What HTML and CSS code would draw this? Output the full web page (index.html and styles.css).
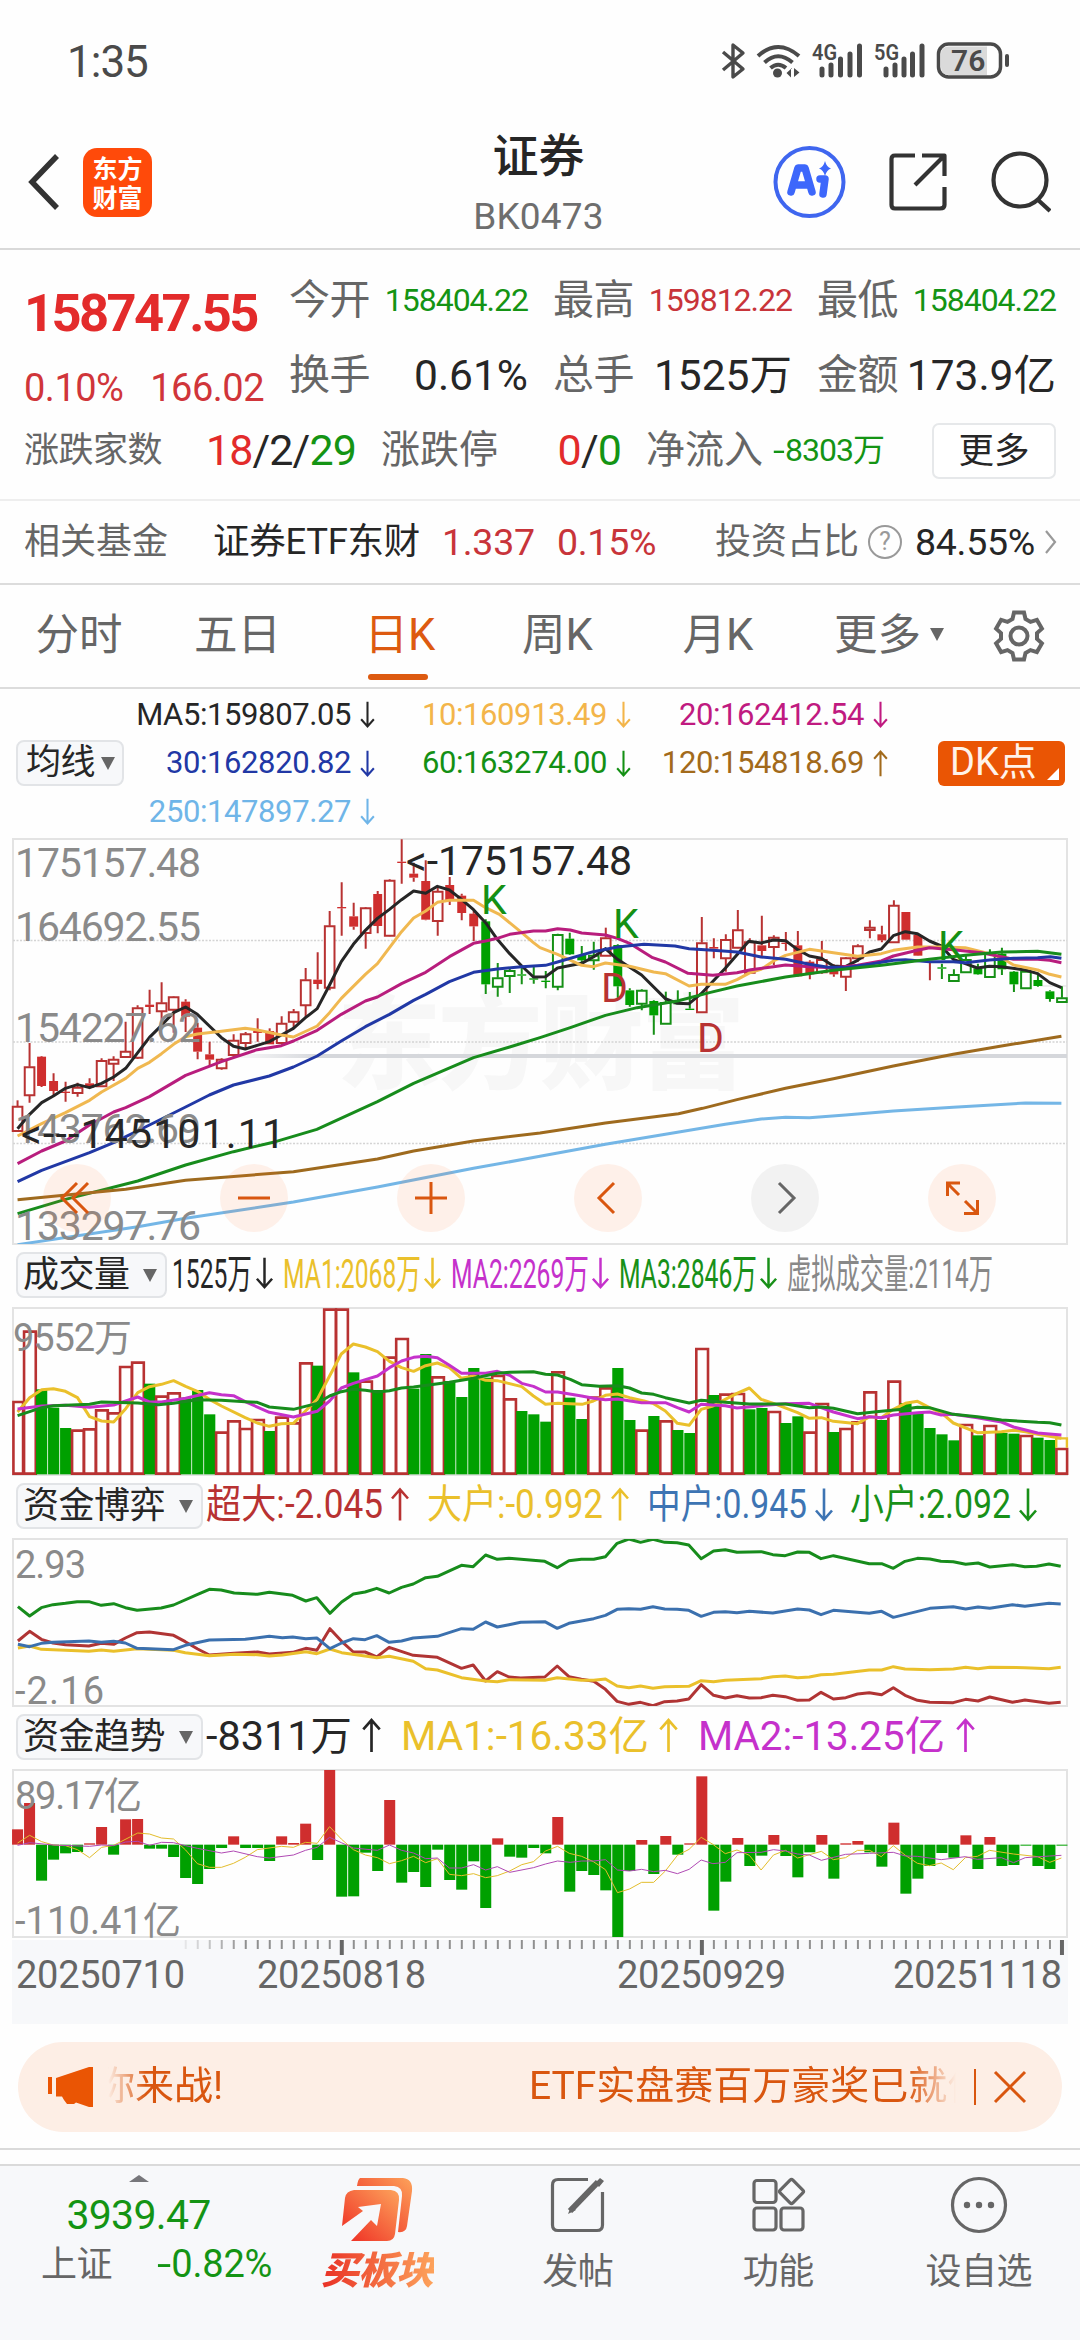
FILE: index.html
```html
<!DOCTYPE html>
<html lang="zh-CN">
<head>
<meta charset="utf-8">
<title>证券 BK0473</title>
<link rel="stylesheet" href="styles.css">
</head>
<body>
<svg class="defs" width="0" height="0">
  <defs>
    <symbol id="down" viewBox="0 0 20 34"><path d="M10 1V32M2 23L10 32L18 23" fill="none" stroke="currentColor" stroke-width="2.6"/></symbol>
    <symbol id="up" viewBox="0 0 20 34"><path d="M10 33V2M2 11L10 2L18 11" fill="none" stroke="currentColor" stroke-width="2.6"/></symbol>
    <linearGradient id="fire" x1="0" y1="1" x2="1" y2="0"><stop offset="0" stop-color="#ee2a22"/><stop offset="1" stop-color="#fda35b"/></linearGradient>
  </defs>
</svg>

<div class="status">
  <span class="clock">1:35</span>
  <svg width="300" height="44" viewBox="715 39 300 44" fill="none" stroke="#4a4a4a">
    <path d="M723 52L743 69L733 77V45L743 53L723 70" stroke-width="3.4" stroke-linejoin="round"/>
    <path d="M758 56Q778 38 799 56M764.500 62.500Q778 50 792.500 62.500M770.500 68Q778 61.500 786 68" stroke-width="4"/>
    <circle cx="777.500" cy="73" r="4.500" fill="#4a4a4a" stroke="none"/>
    <path d="M792 68L786.500 73L791 77.500V68ZM794 68V77L799.500 72.500Z" fill="#4a4a4a" stroke="none"/>
    <path d="M822 69V75M831 65V75M840.500 59V75M850 54V75M859.500 46V75M886 69V75M895 65V75M904 59V75M912.500 54V75M922 46V75" stroke-width="5" stroke-linecap="round"/>
    <rect x="938.500" y="44" width="62" height="33" rx="10" stroke-width="3.500"/>
    <path d="M987 46.500H949Q941 46.500 941 54V67Q941 75 949 75H987Z" fill="#dadada" stroke="none"/>
    <path d="M1007 56V65" stroke-width="4" stroke-linecap="round"/>
    <g fill="#4a4a4a" stroke="none" class="bold">
      <text x="812" y="60" font-size="22" textLength="25" lengthAdjust="spacingAndGlyphs">4G</text>
      <text x="874" y="60" font-size="22" textLength="25" lengthAdjust="spacingAndGlyphs">5G</text>
      <text x="951" y="71" font-size="30">76</text>
    </g>
  </svg>
</div>

<header class="header">
  <svg class="back" width="34" height="60" viewBox="0 0 34 60"><path d="M30 4L5 30L30 56" fill="none" stroke="#333" stroke-width="5.500"/></svg>
  <div class="logo"><span>东方</span><span>财富</span></div>
  <div class="title"><h1>证券</h1><p>BK0473</p></div>
  <div class="actions">
    <svg width="76" height="76" viewBox="770 144 76 76">
      <circle cx="808.500" cy="182" r="34" fill="none" stroke="#3f66ef" stroke-width="4"/>
      <g fill="none" stroke="#3d67fb" stroke-width="7.500" stroke-linecap="round" stroke-linejoin="round"><path d="M790 192L797 168H804L811 192M795 185H806"/><path d="M819 179H824L822 194" /></g>
      <path d="M824 161Q825.500 167 830 168.500Q825.500 170 824 176Q822.500 170 818 168.500Q822.500 167 824 161Z" fill="#3d67fb"/>
    </svg>
    <svg width="62" height="64" viewBox="885 150 62 64" fill="none" stroke="#333" stroke-width="4.200" stroke-linejoin="round"><path d="M914 155.500H894Q890.500 155.500 890.500 159V205Q890.500 208.500 894 208.500H939Q943.500 208.500 943.500 205V187M921 155.500H943.500V176M943.500 155.500L914 185"/></svg>
    <svg width="64" height="64" viewBox="986 150 64 64" fill="none" stroke="#333" stroke-width="4.200"><circle cx="1019" cy="180" r="26.500"/><path d="M1036 199L1049 211"/></svg>
  </div>
</header>

<section class="quote">
  <div class="now">
    <strong>158747.55</strong>
    <div class="chg"><span>0.10%</span><span>166.02</span></div>
  </div>
  <div class="stats">
    <div><label>今开</label><b class="sm green">158404.22</b></div>
    <div><label>最高</label><b class="sm red">159812.22</b></div>
    <div><label>最低</label><b class="sm green">158404.22</b></div>
    <div><label>换手</label><b>0.61%</b></div>
    <div><label>总手</label><b>1525万</b></div>
    <div><label>金额</label><b>173.9亿</b></div>
  </div>
  <div class="breadth">
    <div><label class="s35">涨跌家数</label><b class="big"><i class="up">18</i>/2/<i class="green">29</i></b></div>
    <div><label class="s39">涨跌停</label><b class="big"><i class="up">0</i>/<i class="green">0</i></b></div>
    <div><label class="s39">净流入</label><b class="sm green"><i class="minus"></i>8303万</b></div>
    <button>更多</button>
  </div>
</section>

<section class="fund">
  <label>相关基金</label><span class="name">证券ETF东财</span><span class="red">1.337</span><span class="red">0.15%</span>
  <label>投资占比</label><em>?</em><span class="share">84.55%</span>
  <svg width="14" height="26" viewBox="0 0 14 26"><path d="M2 2L11 13L2 24" fill="none" stroke="#999" stroke-width="2.200"/></svg>
</section>

<nav class="tabs">
  <span>分时</span><span>五日</span><span class="on">日K</span><span>周K</span><span>月K</span><span class="more">更多<i class="tri"></i></span>
  <svg width="54" height="54" viewBox="-27 -27 54 54" fill="none" stroke="#666" stroke-width="4"><path d="M-5 -23.500H5L6.500 -17L11.500 -14.100L17.900 -16.100L22.900 -7.400L18 -2.900V2.900L22.900 7.400L17.900 16.100L11.500 14.100L6.500 17L5 23.500H-5L-6.500 17L-11.500 14.100L-17.900 16.100L-22.900 7.400L-18 2.900V-2.900L-22.900 -7.400L-17.900 -16.100L-11.500 -14.100L-6.500 -17Z"/><circle r="8.500"/></svg>
</nav>

<section class="ma">
  <button class="pick ma-pick">均线<i class="tri"></i></button>
  <div class="ma-grid">
    <span style="color:#262626">MA5:159807.05<svg><use href="#down"/></svg></span>
    <span style="color:#f3b54a">10:160913.49<svg><use href="#down"/></svg></span>
    <span style="color:#c01a80">20:162412.54<svg><use href="#down"/></svg></span>
    <span style="color:#2138a5">30:162820.82<svg><use href="#down"/></svg></span>
    <span style="color:#149014">60:163274.00<svg><use href="#down"/></svg></span>
    <span style="color:#a26a1b">120:154818.69<svg><use href="#up"/></svg></span>
    <span style="color:#6fb5e8">250:147897.27<svg><use href="#down"/></svg></span>
  </div>
  <div class="dk">DK点</div>
</section>

<section class="panel kline">
  <svg class="labels under" viewBox="0 838 1080 405">
    <text class="wm" x="337" y="1080" textLength="408">东方财富</text>
    <path d="M13 939.500H1067M13 1041H1067M13 1142.500H1067" stroke="#d4d4d4" stroke-width="1.300" stroke-dasharray="2 1.500"/>
    <rect x="220" y="1053" width="847" height="4" fill="url(#bar)"/>
    <path d="M1040 985H1067" stroke="#ddd"/>
    <linearGradient id="bar"><stop offset="0" stop-color="#d5d7db" stop-opacity="0"/><stop offset=".12" stop-color="#d5d7db"/></linearGradient>
  </svg>
  <svg class="plot" id="kline" viewBox="0 24 3136 1215" preserveAspectRatio="none"></svg>
  <svg class="labels" viewBox="0 838 1080 405" font-size="41">
    <g fill="#8a8a8a">
      <text x="15" y="876" textLength="186">175157.48</text><text x="15" y="940" textLength="186">164692.55</text><text x="15" y="1041" textLength="186">154227.62</text><text x="15" y="1142" textLength="186">143762.69</text><text x="15" y="1239" textLength="186">133297.76</text>
    </g>
    <g fill="#262626"><text x="406" y="874" textLength="226">&lt;-175157.48</text><text x="21" y="1147" textLength="264">&lt;---145101.11</text></g>
    <g fill="#149014"><text x="481" y="913">K</text><text x="613" y="937">K</text><text x="938" y="959">K</text></g>
    <g fill="#b83232"><text x="601" y="1001">D</text><text x="697" y="1051">D</text></g>
  </svg>
  <div class="controls">
    <span><svg viewBox="0 0 68 68"><path d="M34 19L19 34L34 49M45 19L30 34L45 49"/></svg></span>
    <span><svg viewBox="0 0 68 68"><path d="M18 34H50"/></svg></span>
    <span><svg viewBox="0 0 68 68"><path d="M18 34H50M34 18V50"/></svg></span>
    <span><svg viewBox="0 0 68 68"><path d="M40 19L25 34L40 49"/></svg></span>
    <span class="off"><svg viewBox="0 0 68 68"><path d="M28 19L43 34L28 49"/></svg></span>
    <span><svg viewBox="0 0 68 68"><path d="M32 19H19.500V32M19.500 19.500L31 31M37 37L49 49M49.500 36V49.500H36" /></svg></span>
  </div>
</section>

<div class="legend l1">
  <button class="pick w150">成交量<i class="tri"></i></button>
  <svg viewBox="172 1248 908 56" font-size="40">
    <g fill="#262626" color="#262626"><text x="172" y="1289" textLength="80" lengthAdjust="spacingAndGlyphs">1525万</text><use href="#down" x="255" y="1257" width="19" height="34"/></g>
    <g fill="#eac02b" color="#eac02b"><text x="283" y="1289" textLength="138" lengthAdjust="spacingAndGlyphs">MA1:2068万</text><use href="#down" x="423" y="1257" width="19" height="34"/></g>
    <g fill="#c531cb" color="#c531cb"><text x="451" y="1289" textLength="138" lengthAdjust="spacingAndGlyphs">MA2:2269万</text><use href="#down" x="591" y="1257" width="19" height="34"/></g>
    <g fill="#189018" color="#189018"><text x="619" y="1289" textLength="138" lengthAdjust="spacingAndGlyphs">MA3:2846万</text><use href="#down" x="759" y="1257" width="19" height="34"/></g>
    <text fill="#888" x="787" y="1289" textLength="206" lengthAdjust="spacingAndGlyphs">虚拟成交量:2114万</text>
  </svg>
</div>
<section class="panel sub">
  <svg class="plot" id="volume" viewBox="0 201 3136 501" preserveAspectRatio="none"></svg>
  <svg class="labels" viewBox="0 1307 1080 167" font-size="38"><text fill="#8a8a8a" x="13" y="1350" textLength="119">9552万</text></svg>
</section>

<div class="legend l2">
  <button class="pick">资金博弈<i class="tri"></i></button>
  <svg viewBox="206 1478 874 56" font-size="40">
    <g fill="#b83232" color="#b83232"><text x="206" y="1518" textLength="177" lengthAdjust="spacingAndGlyphs">超大:-2.045</text><use href="#up" x="390" y="1487" width="20" height="35"/></g>
    <g fill="#eac02b" color="#eac02b"><text x="427" y="1518" textLength="176" lengthAdjust="spacingAndGlyphs">大户:-0.992</text><use href="#up" x="610" y="1487" width="20" height="35"/></g>
    <g fill="#3d74b3" color="#3d74b3"><text x="647" y="1518" textLength="160" lengthAdjust="spacingAndGlyphs">中户:0.945</text><use href="#down" x="814" y="1487" width="20" height="35"/></g>
    <g fill="#189018" color="#189018"><text x="850" y="1518" textLength="161" lengthAdjust="spacingAndGlyphs">小户:2.092</text><use href="#down" x="1018" y="1487" width="20" height="35"/></g>
  </svg>
</div>
<section class="panel sub">
  <svg class="plot" id="flow" viewBox="0 174 1568 501" preserveAspectRatio="none"></svg>
  <svg class="labels" viewBox="0 1538 1080 167" font-size="38" fill="#8a8a8a"><text x="15" y="1577" textLength="71">2.93</text><text x="15" y="1703" textLength="89">-2.16</text></svg>
</section>

<div class="legend l3">
  <button class="pick">资金趋势<i class="tri"></i></button>
  <svg viewBox="206 1709 874 56" font-size="40">
    <g fill="#262626" color="#262626"><text x="206" y="1750" textLength="146" lengthAdjust="spacingAndGlyphs">-8311万</text><use href="#up" x="361" y="1718" width="21" height="35"/></g>
    <g fill="#eac02b" color="#eac02b"><text x="401" y="1750" textLength="248" lengthAdjust="spacingAndGlyphs">MA1:-16.33亿</text><use href="#up" x="658" y="1718" width="21" height="35"/></g>
    <g fill="#c531cb" color="#c531cb"><text x="698" y="1750" textLength="247" lengthAdjust="spacingAndGlyphs">MA2:-13.25亿</text><use href="#up" x="955" y="1718" width="21" height="35"/></g>
  </svg>
</div>
<section class="panel sub">
  <svg class="plot" id="trend" viewBox="0 177 3136 501" preserveAspectRatio="none"></svg>
  <svg class="labels" viewBox="0 1769 1080 167" font-size="38" fill="#8a8a8a"><text x="15" y="1808" textLength="127">89.17亿</text><text x="15" y="1933" textLength="166">-110.41亿</text></svg>
</section>

<section class="axis">
  <svg id="axis" viewBox="12 1939 1056 84" width="1056" height="84" font-size="38" fill="#666">
    <text x="16" y="1987" textLength="169">20250710</text><text x="257" y="1987" textLength="169">20250818</text><text x="617" y="1987" textLength="169">20250929</text><text x="893" y="1987" textLength="169">20251118</text>
  </svg>
</section>

<aside class="notice">
  <svg width="48" height="44" viewBox="47 2064 48 44" fill="#ea5504"><path d="M48 2076H52V2093H48ZM56 2077L89 2066H93V2106H89L76 2101.500L74 2103H67L64 2099L62 2095.500H56Z"/></svg>
  <div class="ticker"><span class="t1">你来战!</span><span class="t2">ETF实盘赛百万豪奖已就位</span></div>
  <i class="sep"></i>
  <svg width="34" height="34" viewBox="0 0 34 34"><path d="M2 2L32 32M32 2L2 32" stroke="#d9560f" stroke-width="3"/></svg>
</aside>
<div class="gap"></div>

<footer class="bottom">
  <div class="index"><i class="caret"></i><b>3939.47</b><p><span>上证</span><em><i class="minus"></i>0.82%</em></p></div>
  <div class="buy">
    <svg width="74" height="66" viewBox="340 2176 74 66" fill="url(#fire)"><path d="M360 2177H403Q413 2178 412 2190L407 2225Q406 2232 398 2231L402 2195Q403 2186 394 2185H357Q358 2178 360 2177Z"/><path fill-rule="evenodd" d="M354 2189H391Q400 2190 399 2199L395 2233Q394 2240 387 2240H351L371 2219L377 2225L381 2203L358 2206L363 2210L342 2225L345 2197Q346 2190 354 2189Z"/></svg>
    <span>买板块</span>
  </div>
  <div>
    <svg width="60" height="60" viewBox="548 2174 60 60" fill="none" stroke="#666" stroke-width="3.200"><path d="M588 2178.500H558Q552.500 2178.500 552.500 2184V2224Q552.500 2229.500 558 2229.500H597Q602.500 2229.500 602.500 2224V2191"/><path d="M570 2210L598 2181" stroke-width="6"/><path d="M568 2213L571 2205L576 2209ZM600 2177L604 2180L599 2186L595 2182Z" fill="#666" stroke="none"/></svg>
    <span>发帖</span>
  </div>
  <div>
    <svg width="60" height="60" viewBox="748 2174 60 60" fill="none" stroke="#666" stroke-width="3.200"><rect x="754" y="2179.500" width="22" height="22" rx="3"/><rect x="754" y="2207" width="22" height="22" rx="3"/><rect x="781" y="2207" width="22" height="22" rx="3"/><rect x="782.500" y="2181.500" width="18" height="18" rx="2" transform="rotate(45 791.500 2190.500)"/></svg>
    <span>功能</span>
  </div>
  <div>
    <svg width="60" height="60" viewBox="949 2174 60 60" fill="none" stroke="#666" stroke-width="3.200"><circle cx="979" cy="2204" r="26.500"/><g fill="#666" stroke="none"><circle cx="967" cy="2204" r="3.200"/><circle cx="979" cy="2204" r="3.200"/><circle cx="991" cy="2204" r="3.200"/></g></svg>
    <span>设自选</span>
  </div>
</footer>
<script src="charts.js"></script>
</body>
</html>
```
FILE: styles.css
```css
* { box-sizing: border-box; margin: 0; padding: 0; }
body { width: 1080px; height: 2340px; overflow: hidden; background: #fefefe; color: #262626; font-family: Roboto, "Noto Sans CJK SC", sans-serif; }
svg { display: block; flex: none; }
svg text { font-family: Roboto, "Noto Sans CJK SC", sans-serif; }
.defs { position: absolute; }
i, em { font-style: normal; }
b { font-weight: 400; }
button { font: inherit; color: inherit; }
.red { color: #c8343a; }
.up { color: #e32b2b; }
.green { color: #149414; }
.bold { font-weight: 600; }
.minus::before { content: "-"; display: inline-block; transform: scaleX(1.35); transform-origin: left; margin-right: 4px; }

.status { height: 124px; padding: 39px 65px 0 67px; display: flex; justify-content: space-between; }
.clock { font-size: 44px; line-height: 46px; letter-spacing: -1px; color: #4a4a4a; }

.header { height: 126px; border-bottom: 2px solid #d9d9d9; display: grid; grid-template-columns: 56px 71px 1fr 310px; padding-left: 27px; }
.back { margin-top: 28px; }
.logo { margin-top: 24px; width: 69px; height: 69px; border-radius: 14px; background: #ff4a0a; color: #fff; font: 700 25px/29px "Noto Sans CJK SC", sans-serif; display: flex; flex-direction: column; align-items: center; padding-top: 5px; }
.title { text-align: center; padding-left: 152px; width: 617px; }
.title h1 { font-size: 46px; font-weight: 500; line-height: 65px; }
.title p { font-size: 37px; line-height: 50px; color: #6e6e6e; letter-spacing: .2px; margin-top: 3px; }
.actions { display: flex; align-items: center; gap: 39px; padding-bottom: 8px; }

.quote { height: 251px; border-bottom: 2px solid #eee; padding-top: 13px; display: grid; grid-template-columns: 265px 766px; grid-template-rows: 150px 75px; padding-left: 24px; }
.now { color: #e32b2b; height: 175px; padding-top: 12px; }
.now strong { display: block; font-size: 52.500px; line-height: 76px; letter-spacing: -2.600px; }
.chg { display: flex; justify-content: space-between; width: 240px; font-size: 38px; line-height: 75px; letter-spacing: -.5px; color: #d0353a; }
.stats { display: grid; grid-template-columns: repeat(3, 239px); column-gap: 25px; grid-auto-rows: 75px; }
.stats div, .breadth div { display: flex; justify-content: space-between; align-items: center; line-height: 75px; white-space: nowrap; }
.quote label { font-size: 41px; color: #666; letter-spacing: -.5px; }
.quote b { font-size: 42.500px; }
.quote b.sm { font-size: 32px; letter-spacing: -1px; }
.quote .s35 { font-size: 35px; }
.quote .s39 { font-size: 39px; letter-spacing: 0; }
.quote b.big { font-size: 43px; letter-spacing: -.9px; }
.breadth { grid-column: 1 / 3; display: grid; grid-template-columns: 332px 240px 238px 124px; column-gap: 25px; align-items: center; height: 75px; width: 1032px; justify-content: start; }
.breadth button { height: 56px; width: 124px; border: 2px solid #e6e8ea; border-radius: 7px; background: #fff; font-size: 35.500px; line-height: 50px; margin-left: 23px; }

.fund { height: 84px; border-bottom: 2px solid #dcdcdc; padding-left: 24px; display: grid; grid-template-columns: 189px 229px 115px 158px 151px 49px 129px 20px; align-items: center; line-height: 80px; font-size: 37.500px; letter-spacing: -.3px; white-space: nowrap; }
.fund label { font-size: 36px; color: #666; letter-spacing: 0; }
.fund .name { font-size: 36.500px; }
.fund em { width: 34px; height: 34px; border: 2.500px solid #999; border-radius: 50%; color: #999; font-size: 25px; line-height: 29px; text-align: center; letter-spacing: 0; margin-left: 2px; }

.tabs { height: 104px; border-bottom: 2px solid #dcdcdc; display: grid; grid-template-columns: 158px 159px 166px 149px 172px 188px 54px; align-items: center; text-align: center; font-size: 43.500px; line-height: 100px; color: #666; }
.tabs span { position: relative; }
.tabs .more { padding-right: 18px; }
.tabs .on { color: #dd5a10; }
.tabs .on::after { content: ""; position: absolute; left: 51px; bottom: 6px; width: 60px; height: 6px; border-radius: 3px; background: #dd5a10; }
.tri { display: inline-block; border: 7.500px solid transparent; border-top: 13px solid #666; border-bottom: 0; }
.tabs .tri { margin-left: 9px; margin-bottom: 9px; }

.ma { height: 150px; display: grid; grid-template-columns: 108px 765px 1fr; padding: 0 16px; align-items: center; }
.ma > * { position: relative; top: -1px; }
.pick { height: 46px; border: 2px solid #e2e4e7; border-radius: 8px; background: #f7f8fa; font-size: 36px; line-height: 40px; display: flex; align-items: center; justify-content: space-between; padding: 0 8px 0 5px; letter-spacing: -.5px; white-space: nowrap; }
.ma-pick { padding: 0 7px 0 8px; font-size: 35px; }
.ma-grid { display: grid; grid-template-columns: 252px 256px 257px; grid-auto-rows: 48.500px; }
.ma-grid span { display: flex; justify-content: flex-end; align-items: center; gap: 8px; font-size: 31px; letter-spacing: -.4px; line-height: 48px; }
.ma-grid svg { width: 17px; height: 27px; }
.ma .dk { width: 127px; height: 45px; margin-left: 49px; border-radius: 6px; background: #ea5504; color: #fff3ea; font-size: 38px; line-height: 43px; padding-left: 12px; }
.dk::after { content: ""; position: absolute; right: 6px; bottom: 6px; border-left: 12px solid transparent; border-bottom: 12px solid #fff; }

.panel { position: relative; width: 1080px; }
.panel::before { content: ""; position: absolute; left: 12px; right: 12px; top: -1px; bottom: -1px; border: 2px solid #e3e3e3; }
.plot, .labels { position: absolute; left: 0; top: 0; width: 1080px; height: 100%; }
.labels { overflow: visible; }
.plot * { vector-effect: non-scaling-stroke; }
.kline { height: 405px; }
.sub { height: 167px; }
.wm { font-size: 104px; font-weight: 900; fill: #f7f7f7; }
.controls { position: absolute; left: 42.500px; top: 325px; display: flex; gap: 109px; }
.controls span { width: 68px; height: 68px; border-radius: 50%; background: rgba(255, 120, 50, .1); }
.controls path { fill: none; stroke: #d9560f; stroke-width: 3; }
.controls .off { background: rgba(80, 80, 80, .07); }
.controls .off path { stroke: #666; }

.legend { display: flex; align-items: center; padding-left: 16px; height: 64px; }
.legend .pick { width: 187px; }
.legend .pick.w150 { width: 151px; }
.legend > svg { width: 874px; height: 56px; margin-left: 3px; overflow: visible; }
.legend.l1 > svg { width: 908px; margin-left: 5px; }
.legend > * { position: relative; top: -1px; }

.axis { margin: 3px 12px 0; background: #f7f8fa; height: 84px; }

.notice { margin: 18px 18px 0; height: 90px; border-radius: 45px; background: #fdeee5; color: #d9560f; display: flex; align-items: center; padding-left: 29px; }
.ticker { width: 850px; height: 90px; margin-left: 13px; overflow: hidden; white-space: nowrap; font-size: 39px; line-height: 88px; display: flex; -webkit-mask-image: linear-gradient(90deg, transparent 0, #000 38px, #000 800px, transparent 848px); mask-image: linear-gradient(90deg, transparent 0, #000 38px, #000 800px, transparent 848px); }
.ticker span { flex: none; }
.t1 { width: 433px; margin-left: -12px; }
.sep { width: 1.500px; height: 36px; background: #d9560f; margin: 0 17px 0 16px; }
.gap { margin-top: 16px; height: 18px; border: solid #dadada; border-width: 2px 0; }

.bottom { height: 175px; background: #f7f8fa; display: grid; grid-template-columns: 277px repeat(4, 200.500px); color: #666; font-size: 36px; }
.bottom > div { display: flex; flex-direction: column; align-items: center; padding-top: 9px; }
.bottom span { line-height: 50px; letter-spacing: -.5px; }
.bottom > div > span { margin-top: 12px; }
.bottom .buy { padding-top: 11px; }
.bottom .buy span { font-size: 38px; font-weight: 900; font-style: italic; margin-top: 3px; background: linear-gradient(90deg, #e93025, #fda35b); -webkit-background-clip: text; background-clip: text; color: transparent; }
.caret { border: 10px solid transparent; border-bottom: 7px solid #77777b; border-top: 0; }
.index b { font-size: 41px; line-height: 50px; margin-top: 8px; color: #149414; letter-spacing: -.7px; }
.index p { display: flex; gap: 45px; line-height: 48px; padding-left: 41px; width: 277px; white-space: nowrap; }
.index em { font-size: 38px; color: #149414; letter-spacing: -.2px; }
```
FILE: charts.js
```js
const NS = 'http://www.w3.org/2000/svg';
const RED = '#b83232', FILL = '#cf2e2e', GREEN = '#169016', GFILL = '#00a000';
const at = i => 51 + 34.857 * i;

function add(id, tag, attrs) {
  const el = document.createElementNS(NS, tag);
  for (const k in attrs) el.setAttribute(k, attrs[k]);
  document.getElementById(id).appendChild(el);
}
const line = (id, color, pts, w = 3) => add(id, 'polyline', { points: pts, fill: 'none', stroke: color, 'stroke-width': w, 'stroke-linejoin': 'round' });

// Candles: kind, high, body top, body bottom, low. r/g hollow, R/G solid.
const candles = `r808,825,900,900 r636,707,793,815 R675,677,765,768 R727,750,780,795 R752,782,786,812 r755,768,786,797 R742,757,770,772 r682,688,766,768
r676,684,698,750 r572,660,678,680 r523,530,680,684 R476,521,528,549 r454,515,541,572 r496,497,536,605 R505,512,557,603 R575,590,662,685
R632,670,686,703 r682,684,712,716 r610,627,672,680 r603,608,636,655 R562,600,606,632 R592,600,640,640 r556,576,636,640 r534,542,572,590
r411,446,523,560 R364,446,459,475 r240,284,470,478 R154,228,232,314 R215,256,287,296 r228,230,306,353 R180,189,285,307 r145,147,314,316
R25,92,96,158 R95,128,140,152 R88,150,266,268 r165,180,270,314 R138,162,208,222 R188,194,246,268 R240,248,286,330 G265,271,460,489
g396,440,467,497 g408,418,435,486 G408,430,434,460 G402,442,446,458 G420,449,453,472 g308,310,467,478 G305,323,370,372 G345,372,388,404
g332,372,388,416 r290,320,374,374 G340,342,466,500 G472,478,522,527 g475,477,518,538 G508,510,553,611 g482,514,578,578 G478,517,520,520
G483,533,537,537 r258,335,544,544 R322,348,353,382 r310,325,382,422 r237,296,350,352 r322,332,425,426 R254,343,360,375 r313,318,348,402
R303,335,339,359 R300,343,436,437 R388,392,430,445 r330,385,424,428 R400,412,430,437 r378,380,437,480 r340,344,382,392 r268,288,297,322
R284,310,328,334 r208,222,334,336 R243,243,326,326 R308,312,374,375 R390,391,393,448 G398,409,413,444 g415,430,450,452 g370,385,424,425
G398,412,430,431 g355,366,438,440 G350,368,415,432 G420,422,460,483 g420,420,472,473 G425,447,465,467 G478,481,504,512 g466,500,513,515`.split(/\s+/);

candles.forEach((c, i) => {
  const kind = c[0], [hi, top, bot, lo] = c.slice(1).split(',').map(Number), x = at(i);
  const color = /r/i.test(kind) ? RED : GREEN, solid = /[RG]/.test(kind);
  add('kline', 'path', { d: `M${x} ${hi}V${top}M${x} ${bot}V${lo}`, stroke: color, 'stroke-width': 2 });
  if (solid) add('kline', 'rect', { x: x - 13, y: top, width: 26, height: bot - top, fill: kind === 'R' ? FILL : GFILL });
  else add('kline', 'rect', { x: x - 14, y: top + 2, width: 28, height: Math.max(bot - top - 2, 4), fill: '#fff', stroke: color, 'stroke-width': 2 });
});

line('kline', '#262626', '51,893 86,850 121,815 155,795 190,772 225,761 260,770 295,757 330,738 365,712 400,665 434,619 469,583 504,545 539,528 573,550 608,585 643,620 678,646 712,654 747,643 782,632 817,612 852,592 887,560 921,533 957,462 991,392 1026,340 1061,298 1096,262 1131,235 1166,206 1201,180 1236,187 1270,166 1305,177 1340,205 1375,236 1410,275 1444,325 1480,368 1515,405 1549,438 1584,437 1619,411 1689,397 1723,378 1758,353 1793,385 1863,432 1932,503 1967,517 2001,518 2036,488 2106,412 2174,331 2210,336 2246,327 2281,329 2316,356 2350,375 2385,382 2420,405 2455,407 2490,388 2525,363 2559,354 2594,314 2629,302 2664,308 2699,330 2733,345 2768,385 2803,398 2838,411 2873,406 2908,407 2977,417 3013,428 3048,455 3082,470');
line('kline', '#f0b850', '51,915 121,878 190,845 260,808 295,783 365,742 400,712 434,694 469,668 504,640 539,617 573,609 643,601 712,592 747,597 817,612 852,618 921,585 957,545 991,502 1061,430 1096,398 1131,350 1166,302 1201,261 1236,240 1270,214 1305,208 1375,208 1410,230 1450,250 1515,305 1549,335 1568,350 1619,370 1689,403 1723,407 1758,396 1828,406 1898,423 1932,428 2001,465 2036,460 2106,460 2140,446 2178,425 2210,415 2246,390 2281,373 2350,355 2420,365 2490,376 2559,368 2594,358 2664,348 2733,348 2803,350 2873,368 2908,380 2943,402 3013,417 3048,430 3082,438');
line('kline', '#b81d7d', '51,998 121,960 190,930 260,882 330,843 365,830 434,797 539,733 643,692 747,656 817,644 852,630 921,598 991,550 1061,510 1096,498 1166,458 1236,424 1305,377 1375,337 1410,330 1444,322 1480,310 1549,300 1584,300 1619,293 1656,297 1689,306 1758,312 1793,322 1828,337 1895,380 1932,393 1998,427 2070,433 2140,425 2180,416 2246,407 2281,402 2350,407 2420,410 2490,403 2559,390 2594,375 2664,358 2699,350 2768,356 2850,365 2908,377 2943,385 3013,385 3048,388 3082,395');
line('kline', '#2138a5', '51,1052 121,1018 260,965 330,935 434,882 539,828 608,792 678,762 782,735 852,708 921,675 991,630 1061,587 1131,550 1201,508 1236,490 1305,452 1375,424 1444,414 1515,407 1584,403 1619,393 1723,362 1793,348 1870,340 1960,345 2001,353 2070,358 2140,363 2210,378 2281,385 2350,400 2400,408 2455,410 2525,400 2594,388 2629,386 2699,392 2768,392 2803,395 2873,387 2943,382 3013,380 3050,377 3082,382');
line('kline', '#178c1c', '51,1148 190,1105 400,1050 539,1002 678,962 800,932 920,895 1096,812 1201,757 1375,680 1480,648 1568,620 1656,590 1758,553 1850,530 1967,510 2060,485 2140,465 2281,438 2420,418 2560,403 2699,385 2803,373 2908,363 3013,361 3082,370');
line('kline', '#9e6a1e', '51,1106 365,1075 539,1048 852,1022 1096,984 1201,960 1375,930 1568,906 1758,876 1970,848 2040,832 2140,806 2281,772 2420,743 2594,705 2768,670 2908,645 3082,616');
line('kline', '#74b6e6', '51,1241 400,1187 539,1162 852,1113 1096,1068 1375,1012 1568,976 1758,940 1967,904 2106,880 2210,864 2281,859 2350,860 2455,852 2594,840 2768,829 2978,816 3082,817');

// Volume bars: kind and top edge.
const volume = 'r481 r270 g445 g500 g561 r567 r563 r506 r515 r376 r363 g428 r465 r455 g470 g447 g520 r573 r539 r562 r535 g570 r528 r545 r365 g374 r204 r204 g394 r420 g447 r348 r292 g443 g339 r407 g420 g468 g381 g410 r403 r473 g510 g520 g542 r392 g470 g534 r468 r440 g381 g537 r567 g525 r539 g567 g576 r322 g462 r459 r457 g505 g501 r511 g546 g526 r573 r487 g573 r562 r542 r452 g537 r420 g486 g515 g561 g580 g598 r550 g583 r553 g576 g578 r583 g590 g597 r622'.split(' ');
volume.forEach((v, i) => {
  const top = +v.slice(1), x = at(i);
  if (v[0] === 'g') add('volume', 'rect', { x: x - 16, y: top, width: 32.5, height: 700 - top, fill: GFILL });
  else add('volume', 'rect', { x: Math.max(x - 16, 39), y: top + 2, width: i === 0 ? 28 : i === 87 ? 31 : 34, height: 696 - top, fill: '#fff', stroke: RED, 'stroke-width': 2.6 });
});
add('volume', 'path', { d: 'M3067 620V592H3098V620', fill: 'none', stroke: '#eac02b', 'stroke-width': 2.4 });
line('volume', '#eac02b', '51,513 86,470 121,446 155,443 190,451 225,470 260,527 295,540 330,543 365,503 400,455 434,437 469,430 504,419 539,436 573,451 608,475 643,495 712,530 747,546 782,556 817,548 852,547 887,510 921,475 957,405 991,339 1026,309 1061,318 1096,332 1131,361 1166,380 1201,391 1236,374 1270,366 1305,380 1340,412 1375,405 1410,418 1444,419 1515,437 1549,465 1584,490 1620,487 1690,490 1723,480 1758,463 1793,459 1828,470 1870,480 1898,488 1932,510 1967,547 2001,553 2036,505 2070,495 2106,475 2140,457 2176,441 2210,475 2246,487 2316,515 2350,532 2385,530 2420,541 2490,548 2525,527 2559,530 2594,505 2629,487 2664,481 2699,500 2733,515 2768,546 2838,575 2908,572 2943,568 2978,572 3013,580 3082,592');
line('volume', '#c531cb', '51,504 121,495 190,493 260,499 330,492 400,468 434,483 469,483 539,472 608,455 643,461 678,464 712,482 782,514 852,528 921,511 957,480 991,441 1026,427 1061,416 1096,405 1131,380 1166,360 1201,349 1236,346 1270,350 1305,373 1340,397 1410,397 1444,391 1480,403 1515,427 1549,436 1584,453 1619,453 1689,465 1723,472 1758,476 1793,474 1863,485 1932,485 1967,500 2001,513 2036,490 2070,492 2106,494 2140,501 2210,494 2281,488 2350,487 2420,513 2490,533 2525,527 2559,530 2594,522 2664,515 2699,513 2733,522 2768,520 2838,530 2908,543 2943,558 3013,576 3082,582');
line('volume', '#178c1c', '51,524 121,500 155,494 260,490 295,483 400,486 460,491 504,487 573,476 643,478 712,482 747,484 782,498 852,505 921,487 957,465 991,452 1026,445 1061,448 1096,453 1131,449 1166,441 1201,438 1305,424 1375,412 1444,397 1480,394 1549,392 1584,400 1619,402 1656,415 1689,431 1740,436 1793,434 1828,441 1863,456 1898,460 1932,470 2001,486 2036,478 2106,484 2176,489 2281,489 2350,500 2385,498 2420,502 2490,518 2559,511 2629,504 2664,499 2699,500 2768,520 2838,527 2908,537 3013,544 3048,545 3082,552');

line('flow', '#b03434', '26,480 43,451 60,475 77,486 95,491 129,495 147,487 165,490 182,471 199,455 217,453 252,463 269,482 287,504 304,522 340,517 374,513 391,519 425,514 444,502 460,508 479,443 496,481 513,513 530,513 547,528 565,499 600,523 635,529 670,562 687,552 705,600 722,572 739,588 756,591 791,588 809,555 826,587 844,595 862,601 879,625 896,661 913,670 930,664 948,674 965,662 983,660 1000,654 1018,611 1036,643 1053,651 1070,644 1088,651 1105,650 1122,643 1140,647 1158,658 1175,657 1192,634 1210,654 1228,650 1245,639 1262,635 1280,641 1297,620 1314,643 1332,658 1350,664 1384,665 1402,655 1420,660 1437,648 1470,664 1488,657 1523,667 1540,664');
line('flow', '#eac02b', '26,501 43,495 60,505 95,508 129,511 147,507 165,511 199,503 252,508 269,515 304,524 340,520 374,521 391,525 410,522 444,512 460,518 479,504 496,515 530,525 547,530 565,526 600,541 618,563 635,567 670,590 705,600 722,602 739,596 791,598 809,590 844,598 862,598 879,594 896,615 913,620 930,615 948,622 965,617 1000,616 1018,599 1036,602 1053,598 1105,593 1122,587 1140,585 1158,590 1175,588 1192,581 1210,580 1262,567 1280,567 1297,557 1314,564 1350,566 1384,564 1402,559 1420,563 1437,559 1488,560 1523,563 1540,559');
line('flow', '#3b70ae', '26,490 43,497 60,487 77,484 129,480 147,484 165,481 182,486 199,502 252,506 269,493 304,477 356,475 391,466 410,470 425,468 444,473 460,471 479,503 496,486 513,473 530,476 547,464 565,484 583,480 600,471 635,466 670,443 687,445 705,423 722,438 739,431 756,424 791,422 809,442 826,427 862,413 879,403 896,385 913,383 930,385 948,377 965,384 983,385 1000,388 1018,406 1036,394 1053,392 1070,395 1088,391 1122,396 1158,384 1175,387 1192,401 1210,388 1262,397 1280,391 1297,409 1350,382 1384,377 1402,384 1420,378 1437,382 1470,371 1488,376 1523,367 1540,369');
line('flow', '#178c1c', '26,377 43,405 60,380 77,371 95,367 112,362 129,362 147,373 165,368 182,380 199,388 234,381 252,372 287,340 304,325 321,327 340,336 374,340 391,334 425,343 444,360 460,350 479,397 496,363 513,339 530,333 547,322 565,336 583,319 600,309 618,290 635,286 670,253 687,257 705,222 722,235 739,232 791,241 809,260 826,239 844,235 862,235 879,227 896,187 913,174 930,184 948,175 965,184 983,185 1000,192 1018,233 1036,210 1053,206 1070,214 1105,212 1122,221 1140,224 1158,213 1175,214 1192,233 1210,224 1262,248 1280,248 1297,262 1314,241 1332,232 1350,234 1366,241 1384,242 1402,250 1420,246 1437,258 1470,251 1488,257 1505,256 1523,249 1540,256');

// Net capital flow bars around the zero line at 401.
const trend = [355,276,509,446,427,423,397,348,431,325,324,413,413,438,501,519,474,411,376,411,411,450,376,396,338,447,177,557,556,425,480,267,515,483,528,416,507,536,451,591,382,437,440,411,427,318,542,480,492,538,678,480,387,489,375,431,397,196,599,512,381,465,434,372,435,499,424,372,503,397,390,424,467,335,548,503,465,426,440,373,474,378,465,462,404,465,474,404];
trend.forEach((v, i) => add('trend', 'rect', { x: at(i) - 16, y: Math.min(v, 401), width: 32, height: Math.abs(v - 401), fill: v < 401 ? FILL : GFILL }));
line('trend', '#e3bd2c', '51,396 86,373 121,392 155,402 190,404 225,416 260,440 295,409 330,403 400,366 434,369 469,381 504,384 539,417 573,458 608,469 643,469 678,457 712,439 747,416 817,406 852,409 887,394 921,397 957,347 991,384 1026,416 1061,432 1096,440 1131,458 1166,449 1201,436 1236,455 1270,443 1305,490 1340,494 1375,488 1410,500 1444,494 1480,480 1515,461 1549,452 1584,420 1619,406 1653,427 1689,436 1723,452 1758,476 1793,545 1828,534 1863,514 1898,514 1932,480 1967,433 2001,415 2036,379 2070,400 2106,428 2140,417 2176,433 2210,477 2246,432 2281,418 2316,441 2385,421 2420,446 2455,440 2490,418 2525,418 2559,437 2594,404 2629,433 2664,457 2699,464 2733,456 2768,476 2803,440 2838,436 2873,418 2943,429 3013,437 3048,454 3082,441', 1);
line('trend', '#b04ab4', '51,403 86,395 155,402 260,406 295,402 330,404 365,393 400,391 434,403 469,394 504,395 539,404 573,412 643,426 678,420 747,437 782,441 852,432 887,418 921,409 957,379 991,395 1026,411 1096,418 1131,402 1166,418 1201,426 1236,443 1270,441 1305,471 1340,471 1375,461 1410,477 1444,467 1480,484 1549,470 1584,459 1619,450 1656,454 1689,450 1723,450 1758,446 1793,477 1828,480 1863,475 1898,482 1932,478 1967,488 2001,475 2036,447 2070,458 2106,454 2140,425 2210,424 2246,416 2281,420 2316,429 2350,432 2385,448 2455,430 2525,427 2594,424 2629,435 2664,436 2733,446 2803,437 2838,445 2908,440 2943,455 2977,440 3048,435 3082,433', 1);

// Day ticks; the labelled dates get a longer mark.
for (let i = 14; i < 88; i++) {
  const x = 17.7 + 12.003 * i, major = i === 27 || i === 57 || i === 87;
  add('axis', 'path', { d: `M${x} 1939V${major ? 1954 : 1948}`, stroke: major ? '#666' : '#8f8f8f', 'stroke-width': major ? 4 : 2, opacity: Math.min(1, (i - 13) / 6) });
}
```
